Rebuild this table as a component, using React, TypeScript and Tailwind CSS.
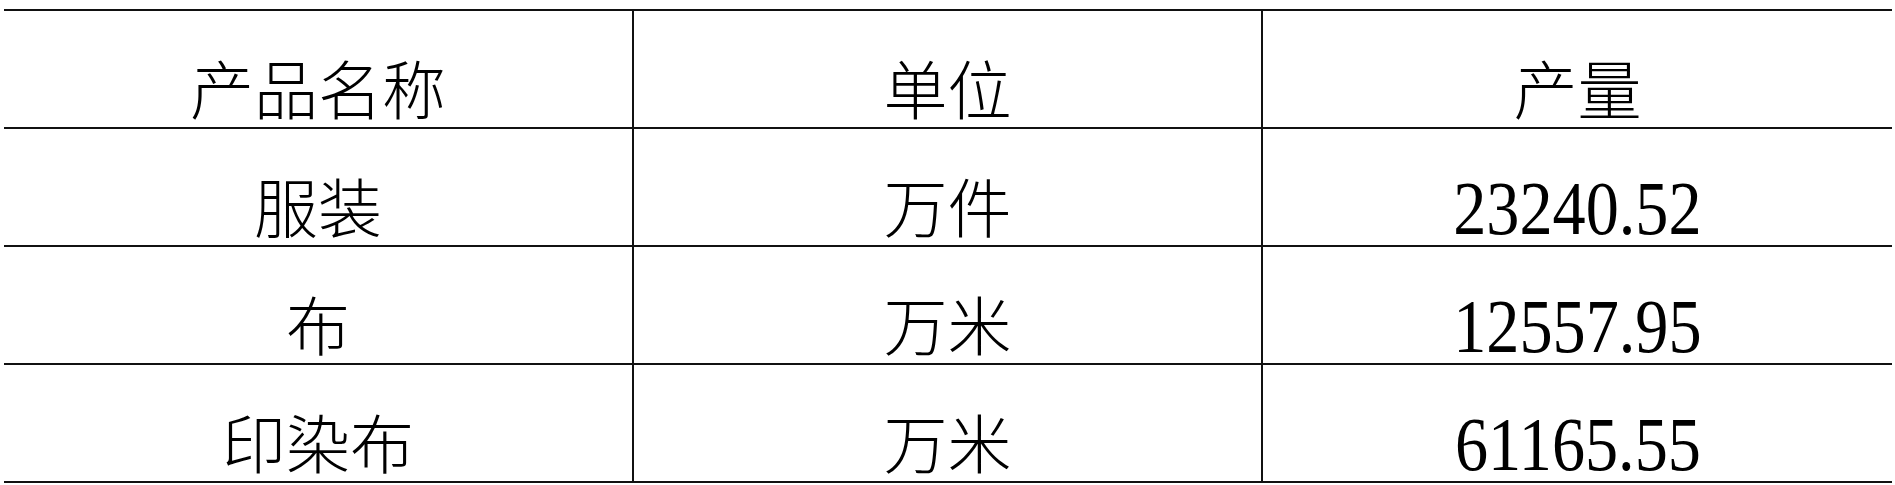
const rows = [
  { name: "服装", unit: "万件", value: "23240.52" },
  { name: "布", unit: "万米", value: "12557.95" },
  { name: "印染布", unit: "万米", value: "61165.55" },
];

function Cell({ children, middle }: { children: React.ReactNode; middle?: boolean }) {
  return (
    <div
      className={
        "flex h-[118px] items-end justify-center border-b-2 border-[#111] " +
        (middle ? "border-x-2" : "")
      }
    >
      {children}
    </div>
  );
}

function Zh({ children }: { children: React.ReactNode }) {
  return <span className="pb-[9px] font-['Noto_Sans_CJK_SC'] text-[64px] leading-none font-light">{children}</span>;
}

export default function App() {
  return (
    <div className="h-[485px] w-[1895px] bg-white pt-[9px] pl-[4px] text-black">
      <div className="grid w-[1888px] grid-cols-[628px_631px_629px] border-t-2 border-[#111]">
        <Cell><Zh>产品名称</Zh></Cell>
        <Cell middle><Zh>单位</Zh></Cell>
        <Cell><Zh>产量</Zh></Cell>
        {rows.map((r) => (
          <div key={r.name} className="contents">
            <Cell><Zh>{r.name}</Zh></Cell>
            <Cell middle><Zh>{r.unit}</Zh></Cell>
            <Cell>
              <div className="font-['Liberation_Serif'] pb-[4px]">
                <span className="inline-block scale-x-[0.86] text-[77px] leading-[0.85]">
                  {r.value}
                </span>
              </div>
            </Cell>
          </div>
        ))}
      </div>
    </div>
  );
}
